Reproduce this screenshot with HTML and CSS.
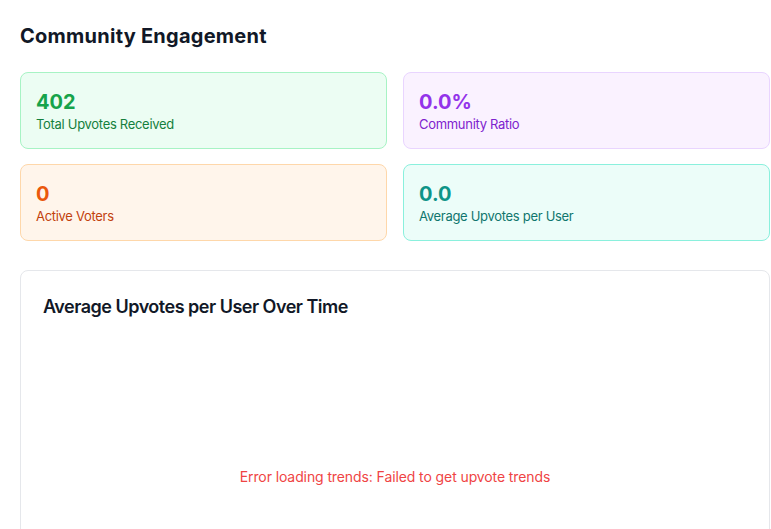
FILE: index.html
```html
<!DOCTYPE html>
<html>
<head>
<meta charset="utf-8">
<link rel="stylesheet" href="styles.css">
</head>
<body>
<div class="page">
  <h2 class="title">Community Engagement</h2>
  <div class="stats">
    <div class="stat green">
      <div class="num">402</div>
      <div class="label">Total Upvotes Received</div>
    </div>
    <div class="stat purple">
      <div class="num">0.0%</div>
      <div class="label">Community Ratio</div>
    </div>
    <div class="stat orange">
      <div class="num">0</div>
      <div class="label">Active Voters</div>
    </div>
    <div class="stat teal">
      <div class="num">0.0</div>
      <div class="label">Average Upvotes per User</div>
    </div>
  </div>
  <div class="chart-card">
    <h3 class="chart-title">Average Upvotes per User Over Time</h3>
    <div class="chart-body">
      <div class="error">Error loading trends: Failed to get upvote trends</div>
    </div>
  </div>
</div>
</body>
</html>
```

FILE: styles.css
```css
* { box-sizing: border-box; }
html, body { margin: 0; padding: 0; background: #fff; }
body { font-family: Inter, "Noto Sans", sans-serif; color: #111827; }
.page { padding: 20px 1px 0 20px; width: 771px; }
.title { margin: 0 0 20px 0; font-size: 20px; line-height: 32px; font-weight: 700; color: #111827; letter-spacing: 0.25px; }
.stats { display: grid; grid-template-columns: 1fr 1fr; column-gap: 16px; row-gap: 15px; }
.stat { border: 1px solid; border-radius: 8px; padding: 15px 15px 14px; height: 77px; }
.num { font-size: 20px; line-height: 28px; font-weight: 700; }
.label { font-size: 13px; line-height: 18px; margin-top: -1px; letter-spacing: -0.3px; }
.green { background: #ecfdf3; border-color: #a7f3c4; }
.green .num { color: #16a34a; }
.green .label { color: #15803d; }
.purple { background: #faf2ff; border-color: #e9d5ff; }
.purple .num { color: #9333ea; }
.purple .label { color: #7e22ce; }
.orange { background: #fff5eb; border-color: #fed7aa; }
.orange .num { color: #ea580c; }
.orange .label { color: #c2410c; }
.teal { background: #ecfdf9; border-color: #8af0dd; }
.teal .num { color: #0d9488; }
.teal .label { color: #0f766e; }
.chart-card { margin-top: 29px; border: 1px solid #e5e7eb; border-radius: 8px; padding: 22px 22px 0; height: 300px; }
.chart-title { margin: 0; font-size: 18px; line-height: 28px; font-weight: 600; color: #111827; letter-spacing: -0.5px; }
.chart-body { height: 300px; display: flex; align-items: center; justify-content: center; padding-top: 12px; }
.error { color: #ef4444; font-size: 14px; line-height: 20px; letter-spacing: -0.1px; }
```
